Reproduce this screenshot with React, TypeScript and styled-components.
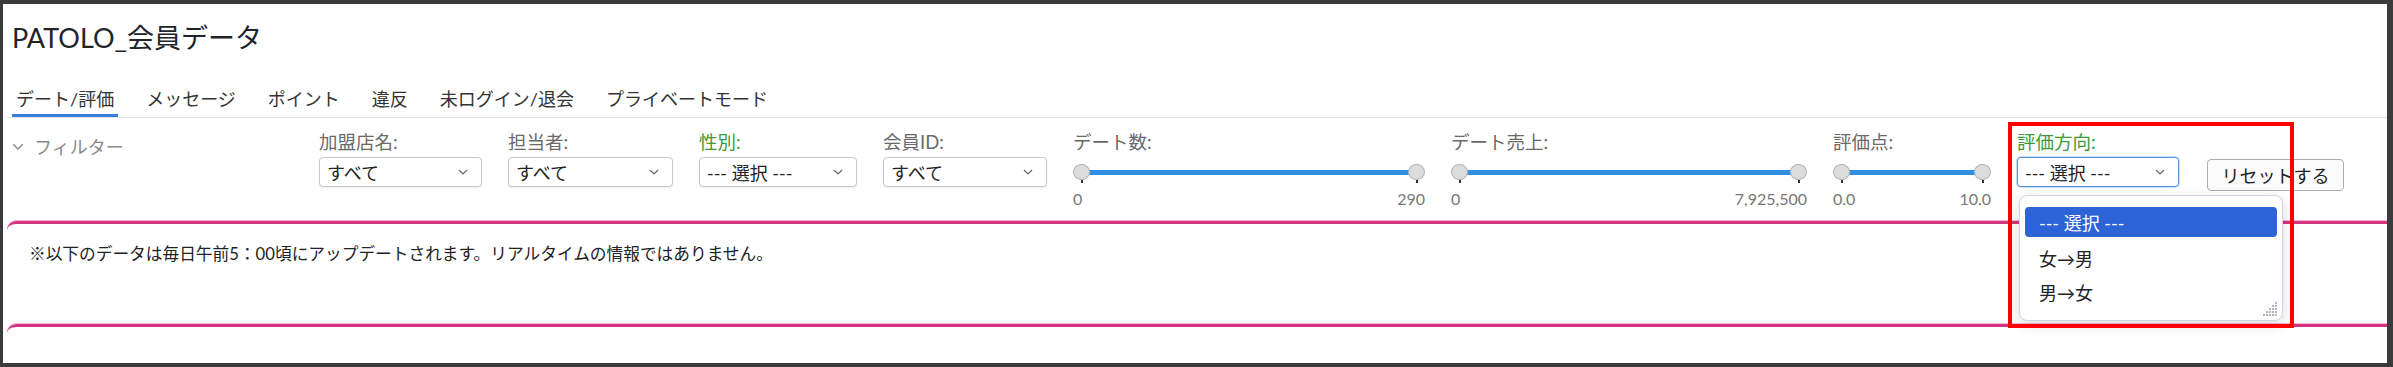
import * as React from 'react';
import styled, { createGlobalStyle } from 'styled-components';

const GlobalStyle = createGlobalStyle`
  html, body {
    margin: 0;
    padding: 0;
    background: #3b3b3b;
  }
  body {
    font-family: Lato, "Noto Sans CJK JP", sans-serif;
    color: #212529;
  }
`;

// Styled Components
const Screen = styled.div`
  width: 2393px;
  height: 367px;
  box-sizing: border-box;
  padding: 4px 6px 4px 3px;
  background: #3b3b3b;
  overflow: hidden;
`;

const Window = styled.div`
  height: 100%;
  box-sizing: border-box;
  background: #fff;
  padding: 17px 0 0 9px;
  overflow: hidden;
`;

const Title = styled.h1`
  margin: 0;
  font-size: 27px;
  line-height: 34px;
  font-weight: 400;
  color: #212529;
`;

const Tabs = styled.div`
  display: flex;
  gap: 24px;
  margin: 32px -20px 0 -5px;
  padding-left: 5px;
  border-bottom: 1px solid #dfe2e6;
`;

const Tab = styled.div<{ $active?: boolean }>`
  padding: 0 4px 3px;
  font-size: 18px;
  line-height: 24px;
  color: #333;
  border-bottom: 3px solid ${(p) => (p.$active ? '#3b7ddd' : 'transparent')};
`;

const FilterRow = styled.div`
  display: flex;
  align-items: flex-start;
  gap: 26px;
  margin-top: 13px;
`;

const FilterToggle = styled.div`
  width: 281px;
  display: flex;
  align-items: center;
  gap: 10px;
  padding-top: 5px;
  font-size: 18px;
  line-height: 22px;
  color: #8a8a8a;
`;

const Field = styled.div<{ $w: number }>`
  position: relative;
  width: ${(p) => p.$w}px;
  flex: 0 0 auto;
`;

const Label = styled.div<{ $green?: boolean }>`
  font-size: 18.5px;
  line-height: 22px;
  margin-bottom: 4px;
  color: ${(p) => (p.$green ? '#3a9b3a' : '#6a6a6a')};
`;

const SelectBox = styled.div<{ $focused?: boolean }>`
  height: 30px;
  box-sizing: border-box;
  display: flex;
  align-items: center;
  justify-content: space-between;
  padding: 0 13px 0 7px;
  border: 1px solid ${(p) => (p.$focused ? '#5f92dc' : '#c9c9c9')};
  border-radius: 4px;
  background: #fff;
  box-shadow: ${(p) =>
    p.$focused ? '0 0 0 1px rgba(95, 146, 220, 0.35)' : '0 1px 2px rgba(0, 0, 0, 0.08)'};
  font-size: 18px;
  color: #222;
  white-space: nowrap;
`;

const TrackRow = styled.div`
  height: 30px;
  display: flex;
  align-items: center;
`;

const Thumb = styled.div`
  position: relative;
  z-index: 1;
  width: 17px;
  height: 16px;
  flex: 0 0 auto;
  box-sizing: border-box;
  border-radius: 50%;
  background: #dcdcdc;
  border: 1px solid #b3b3b3;

  &::after {
    content: '';
    position: absolute;
    left: 6.5px;
    bottom: -4px;
    width: 2px;
    height: 3px;
    background: #333;
  }
`;

const Bar = styled.div`
  flex: 1;
  height: 5px;
  margin: 0 -2px;
  background: #2f8fe3;
`;

const Values = styled.div`
  display: flex;
  justify-content: space-between;
  margin-top: 2px;
  font-size: 16px;
  line-height: 20px;
  color: #777;
`;

const ResetButton = styled.button`
  margin: 28px 0 0 2px;
  width: 137px;
  height: 32px;
  border: 1px solid #adadad;
  border-radius: 4px;
  background: #fbfbfb;
  font-family: inherit;
  font-size: 18px;
  color: #222;
  padding: 0;
`;

const Dropdown = styled.div`
  position: absolute;
  z-index: 2;
  top: 64px;
  left: 2px;
  width: 264px;
  box-sizing: border-box;
  padding: 11px 5px 11px;
  background: #fff;
  border: 1px solid #cdd4e2;
  border-radius: 8px;
  box-shadow: 0 4px 14px rgba(0, 0, 0, 0.14);
`;

const Option = styled.div<{ $selected?: boolean }>`
  height: ${(p) => (p.$selected ? 30 : 34)}px;
  margin-bottom: ${(p) => (p.$selected ? 4 : 0)}px;
  display: flex;
  align-items: center;
  padding-left: 14px;
  border-radius: 4px;
  font-size: 18px;
  color: ${(p) => (p.$selected ? '#fff' : '#222')};
  background: ${(p) => (p.$selected ? '#2d63d6' : 'transparent')};
`;

const Grip = styled.svg`
  position: absolute;
  right: 3px;
  bottom: 2px;
`;

const Highlight = styled.div`
  position: absolute;
  z-index: 3;
  left: -9px;
  top: -9px;
  width: 286px;
  height: 206px;
  box-sizing: border-box;
  border: 4px solid #ff0000;
  pointer-events: none;
`;

const Card = styled.div<{ $h: number }>`
  margin: 12px -30px 0 -5px;
  height: ${(p) => p.$h}px;
  box-sizing: border-box;
  border-top: 3px solid #d3357f;
  border-top-left-radius: 9px;
  box-shadow: 0 -1px 0 #f2b5d1;
  padding: 18px 0 0 22px;
  font-size: 16.7px;
  line-height: 24px;
  color: #222;

  & + & {
    margin-top: 0;
  }
`;

const Chevron = ({ w, color }: { w: number; color: string }) => (
  <svg width={w} height={w * 0.6} viewBox="0 0 10 6" fill="none">
    <polyline points="1,1 5,5 9,1" stroke={color} strokeWidth="1.2" />
  </svg>
);

function Select({ value, focused }: { value: string; focused?: boolean }) {
  return (
    <SelectBox $focused={focused}>
      <span>{value}</span>
      <Chevron w={10} color="#666" />
    </SelectBox>
  );
}

function RangeField({ label, w, min, max }: { label: string; w: number; min: string; max: string }) {
  return (
    <Field $w={w}>
      <Label>{label}</Label>
      <TrackRow>
        <Thumb />
        <Bar />
        <Thumb />
      </TrackRow>
      <Values>
        <span>{min}</span>
        <span>{max}</span>
      </Values>
    </Field>
  );
}

const tabs = ['デート/評価', 'メッセージ', 'ポイント', '違反', '未ログイン/退会', 'プライベートモード'];

const gripDots = [
  [15, 3], [12, 6], [15, 6], [9, 9], [12, 9], [15, 9],
  [6, 12], [9, 12], [12, 12], [15, 12], [3, 15], [6, 15], [9, 15], [12, 15], [15, 15],
];

export default function App() {
  return (
    <>
      <GlobalStyle />
      <Screen>
        <Window>
          <Title>PATOLO_会員データ</Title>
          <Tabs>
            {tabs.map((t, i) => (
              <Tab key={t} $active={i === 0}>
                {t}
              </Tab>
            ))}
          </Tabs>
          <FilterRow>
            <FilterToggle>
              <Chevron w={12} color="#8a8a8a" />
              フィルター
            </FilterToggle>
            <Field $w={163}>
              <Label>加盟店名:</Label>
              <Select value="すべて" />
            </Field>
            <Field $w={165}>
              <Label>担当者:</Label>
              <Select value="すべて" />
            </Field>
            <Field $w={158}>
              <Label $green>性別:</Label>
              <Select value="--- 選択 ---" />
            </Field>
            <Field $w={164}>
              <Label>会員ID:</Label>
              <Select value="すべて" />
            </Field>
            <RangeField label="デート数:" w={352} min="0" max="290" />
            <RangeField label="デート売上:" w={356} min="0" max="7,925,500" />
            <RangeField label="評価点:" w={158} min="0.0" max="10.0" />
            <Field $w={162}>
              <Label $green>評価方向:</Label>
              <Select value="--- 選択 ---" focused />
              <Dropdown>
                <Option $selected>--- 選択 ---</Option>
                <Option>女→男</Option>
                <Option>男→女</Option>
                <Grip width="18" height="18" viewBox="0 0 18 18">
                  {gripDots.map(([x, y]) => (
                    <rect key={`${x}-${y}`} x={x - 1} y={y - 1} width="2" height="2" fill="#b5b5b5" />
                  ))}
                </Grip>
              </Dropdown>
              <Highlight />
            </Field>
            <ResetButton>リセットする</ResetButton>
          </FilterRow>
          <Card $h={103}>
            ※以下のデータは毎日午前5：00頃にアップデートされます。リアルタイムの情報ではありません。
          </Card>
          <Card $h={60} />
        </Window>
      </Screen>
    </>
  );
}
